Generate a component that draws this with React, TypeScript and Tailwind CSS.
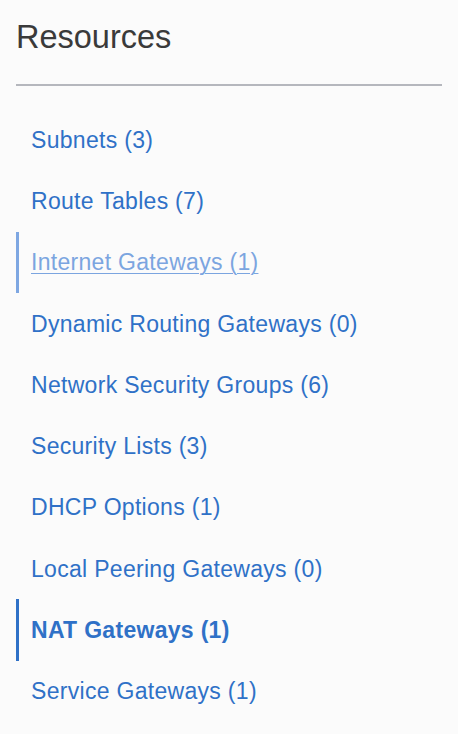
import React from "react";

const items = [
  { label: "Subnets (3)" },
  { label: "Route Tables (7)" },
  { label: "Internet Gateways (1)", state: "hover" },
  { label: "Dynamic Routing Gateways (0)" },
  { label: "Network Security Groups (6)" },
  { label: "Security Lists (3)" },
  { label: "DHCP Options (1)" },
  { label: "Local Peering Gateways (0)" },
  { label: "NAT Gateways (1)", state: "active" },
  { label: "Service Gateways (1)" },
];

export default function App() {
  return (
    <div className="min-h-[734px] w-full bg-[#fbfbfb] px-4 font-['Liberation_Sans',Arial,sans-serif]">
      <h2 className="pt-[21px] text-[32.5px] leading-[32px] font-light text-[#3a3a3a]">
        Resources
      </h2>
      <div className="mt-[31px] h-[2px] bg-[#b5b7bd]" />
      {/* resource links */}
      <nav className="mt-[23px] flex flex-col">
        {items.map((item) => {
          const bar =
            item.state === "active"
              ? "border-[#2f71c7]"
              : item.state === "hover"
                ? "border-[#7ea7e2]"
                : "border-transparent";
          const text =
            item.state === "active"
              ? "font-bold text-[#2f71c7]"
              : item.state === "hover"
                ? "text-[#7ba5e0] underline underline-offset-[3px] decoration-1"
                : "text-[#2f71c7]";
          return (
            <div
              key={item.label}
              className={`flex h-[61.3px] items-center border-l-[3px] pl-3 ${bar}`}
            >
              <a className={`text-[23px] leading-[28px] tracking-[0.3px] ${text}`}>
                {item.label}
              </a>
            </div>
          );
        })}
      </nav>
    </div>
  );
}
